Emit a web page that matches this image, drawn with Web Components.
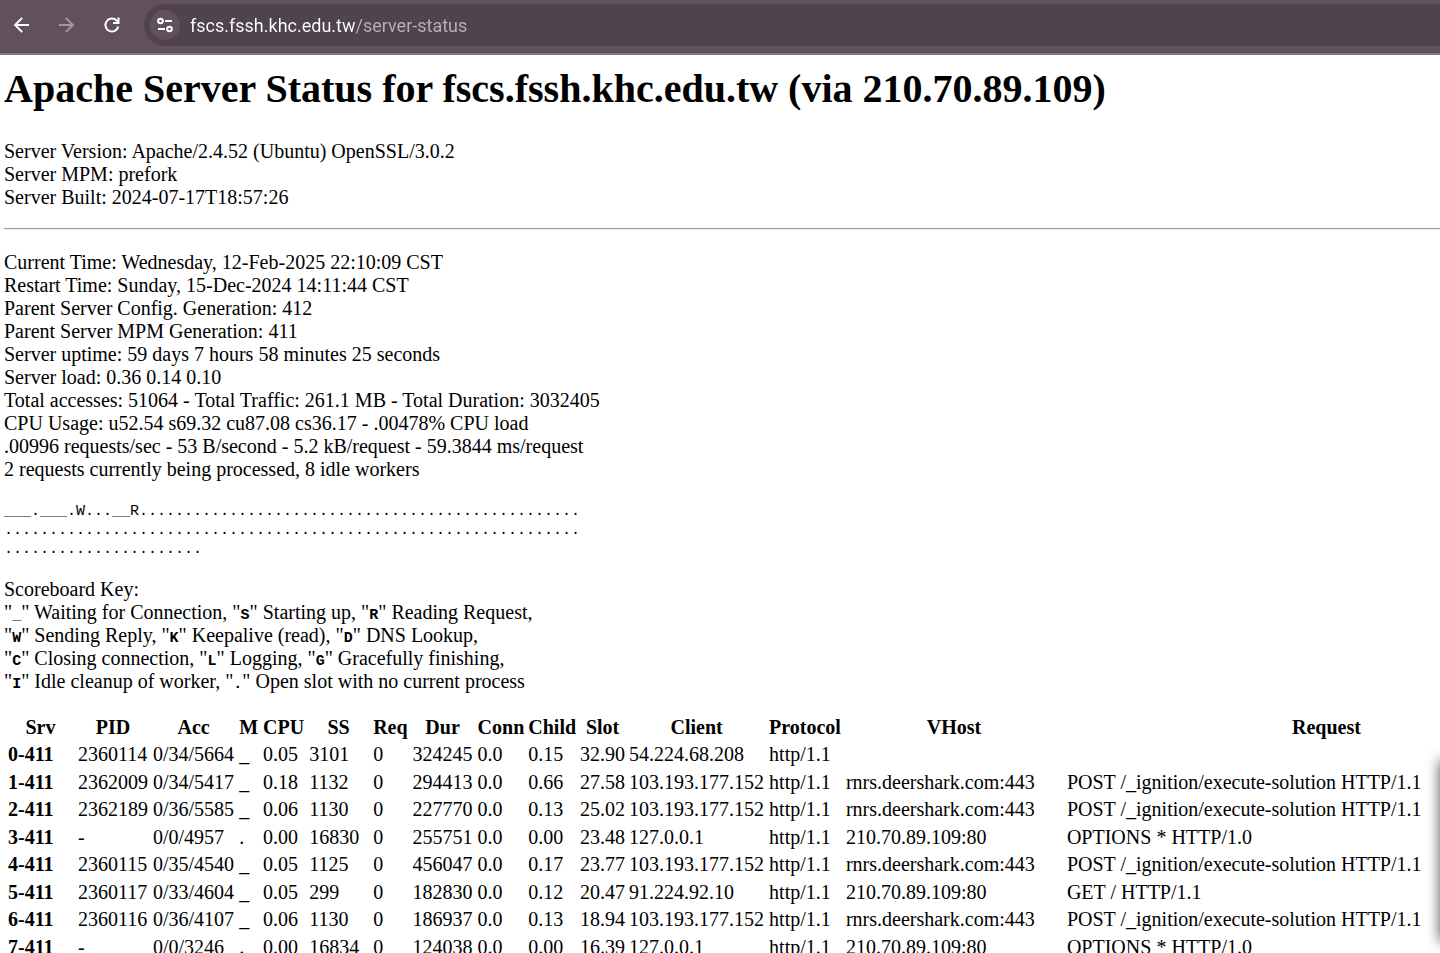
<!DOCTYPE html>
<html lang="en">
<head>
  <meta charset="utf-8">
  <meta name="viewport" content="width=device-width, initial-scale=1">
  <title>Apache Status</title>
  <style>
    body {
      margin: 0;
      height: 100vh;
      display: flex;
      flex-direction: column;
      overflow: hidden;
      background: #fff;
      color: #000;
      font-family: "Liberation Serif", "Times New Roman", serif;
      font-size: 20px;
      line-height: 23px;
    }
  </style>
</head>
<body>
  <browser-toolbar url="fscs.fssh.khc.edu.tw/server-status"></browser-toolbar>
  <status-page>
    <span slot="title">Apache Server Status for fscs.fssh.khc.edu.tw (via 210.70.89.109)</span>
    <info-list>
      <div>Server Version: Apache/2.4.52 (Ubuntu) OpenSSL/3.0.2</div>
      <div>Server MPM: prefork</div>
      <div>Server Built: 2024-07-17T18:57:26</div>
    </info-list>
    <info-list divided>
      <div>Current Time: Wednesday, 12-Feb-2025 22:10:09 CST</div>
      <div>Restart Time: Sunday, 15-Dec-2024 14:11:44 CST</div>
      <div>Parent Server Config. Generation: 412</div>
      <div>Parent Server MPM Generation: 411</div>
      <div>Server uptime: 59 days 7 hours 58 minutes 25 seconds</div>
      <div>Server load: 0.36 0.14 0.10</div>
      <div>Total accesses: 51064 - Total Traffic: 261.1 MB - Total Duration: 3032405</div>
      <div>CPU Usage: u52.54 s69.32 cu87.08 cs36.17 - .00478% CPU load</div>
      <div>.00996 requests/sec - 53 B/second - 5.2 kB/request - 59.3844 ms/request</div>
      <div>2 requests currently being processed, 8 idle workers</div>
    </info-list>
    <score-board workers="___.___.W...__R" slots="150"></score-board>
    <score-key></score-key>
    <worker-table></worker-table>
  </status-page>
  <panel-edge></panel-edge>

  <template id="toolbar-template">
    <style>
      :host {
        display: flex;
        flex: none;
        align-items: center;
        box-sizing: border-box;
        height: 55px;
        padding: 4px 0 7px 8px;
        background: #62515c;
        border-bottom: 2px solid #857580;
      }
      button {
        display: grid;
        place-items: center;
        flex: none;
        width: 28px;
        height: 28px;
        margin-right: 17px;
        padding: 0;
        border: 0;
        border-radius: 50%;
        background: none;
        color: #fff;
      }
      button:disabled {
        color: #a0979d;
      }
      form {
        display: flex;
        flex: 1;
        align-items: center;
        gap: 10px;
        height: 42px;
        margin-left: 1px;
        padding-left: 6px;
        border-radius: 21px 0 0 21px;
        background: #50444c;
      }
      form button {
        width: 30px;
        height: 30px;
        margin: 0;
        background: #62515c;
      }
      /* the host name is white, the path after it is dimmed */
      input {
        flex: 1;
        min-width: 0;
        height: 30px;
        padding: 0;
        border: 0;
        outline: 0;
        background: linear-gradient(90deg, #fff 165px, #b9b1b6 165px);
        background-clip: text;
        -webkit-background-clip: text;
        -webkit-text-fill-color: transparent;
        color: #fff;
        font: 18px Roboto, "Open Sans", sans-serif;
      }
      svg {
        display: block;
        fill: none;
        stroke: currentColor;
        stroke-width: 2;
      }
    </style>
    <button type="button" aria-label="Back">
      <svg width="20" height="20" viewBox="0 0 20 20"><path d="M17 10H3.500M10.200 2.900L3.100 10l7.100 7.100"/></svg>
    </button>
    <button type="button" aria-label="Forward" disabled>
      <svg width="20" height="20" viewBox="0 0 20 20"><path d="M2 10h13.500M8.800 2.900L15.900 10l-7.100 7.100"/></svg>
    </button>
    <button type="button" aria-label="Reload">
      <svg width="20" height="20" viewBox="0 0 20 20"><path d="M16.300 11.500a6.500 6.500 0 1 1-1.500-5.800L16.500 7.500M16.500 2.500v5.500H11"/></svg>
    </button>
    <form>
      <button type="button" aria-label="View site information">
        <svg width="18" height="18" viewBox="0 0 18 18"><circle cx="4.500" cy="5" r="2.300"/><path d="M9 5h7M2 13h7"/><circle cx="13.500" cy="13" r="2.300"/></svg>
      </button>
      <input type="text" aria-label="Address" spellcheck="false">
    </form>
  </template>

  <template id="page-template">
    <style>
      :host {
        display: block;
        flex: 1;
        min-height: 0;
        box-sizing: border-box;
        padding: 11px 0 0 4px;
        overflow: auto;
        scrollbar-width: none;
      }
      h1 {
        margin: 0 0 29px;
        font-size: 40px;
        line-height: 45px;
      }
    </style>
    <h1><slot name="title"></slot></h1>
    <slot></slot>
  </template>

  <template id="info-template">
    <style>
      :host {
        display: block;
        margin-bottom: 19px;
      }
      hr {
        display: none;
        margin: 0 0 21px;
        border: 0;
        border-top: 1px solid #9a9a9a;
        border-bottom: 1px solid #eee;
      }
      :host([divided]) hr {
        display: block;
      }
    </style>
    <hr>
    <slot></slot>
  </template>

  <template id="board-template">
    <style>
      :host {
        display: block;
      }
      pre {
        margin: 21px 0 19px;
        font: 15px/19px "Liberation Mono", "Courier New", monospace;
      }
    </style>
    <pre></pre>
  </template>

  <template id="key-template">
    <style>
      :host {
        display: block;
        margin-bottom: 20px;
      }
      p {
        margin: 0;
      }
      code {
        font: bold 15px/15px "Liberation Mono", "Courier New", monospace;
      }
    </style>
    <p>Scoreboard Key:<br>
      "<code>_</code>" Waiting for Connection,
      "<code>S</code>" Starting up,
      "<code>R</code>" Reading Request,<br>
      "<code>W</code>" Sending Reply,
      "<code>K</code>" Keepalive (read),
      "<code>D</code>" DNS Lookup,<br>
      "<code>C</code>" Closing connection,
      "<code>L</code>" Logging,
      "<code>G</code>" Gracefully finishing,<br>
      "<code>I</code>" Idle cleanup of worker,
      "<code>.</code>" Open slot with no current process</p>
  </template>

  <template id="table-template">
    <style>
      :host {
        display: block;
      }
      table {
        width: max-content;
        border-spacing: 3px 2px;
      }
      th, td {
        padding: 1px;
        white-space: nowrap;
      }
      td, tbody th {
        text-align: left;
      }
      tbody tr:nth-child(odd) > * {
        padding-bottom: 2px;
      }
      /* Child, Slot and Client sit closer together */
      tr > :nth-child(n+10):nth-child(-n+12) {
        padding-left: 0;
      }
      .srv { width: 67px; }
      .ss { width: 61px; }
      .vhost { width: 218px; }
      .request { width: 521px; }
    </style>
    <table>
      <colgroup>
        <col class="srv"><col span="4"><col class="ss"><col span="7"><col class="vhost"><col class="request">
      </colgroup>
      <thead><tr></tr></thead>
      <tbody></tbody>
    </table>
  </template>

  <script>
    class BaseElement extends HTMLElement {
      connectedCallback() {
        if (!this.shadowRoot) {
          const template = document.getElementById(this.constructor.templateId);
          this.attachShadow({ mode: "open" }).appendChild(template.content.cloneNode(true));
          this.render();
        }
      }
      render() {}
    }

    class BrowserToolbar extends BaseElement {
      static templateId = "toolbar-template";
      render() {
        this.shadowRoot.querySelector("input").value = this.getAttribute("url");
        this.shadowRoot.querySelector("form").addEventListener("submit", (event) => event.preventDefault());
      }
    }

    class StatusPage extends BaseElement {
      static templateId = "page-template";
    }

    class InfoList extends BaseElement {
      static templateId = "info-template";
    }

    class ScoreBoard extends BaseElement {
      static templateId = "board-template";
      render() {
        // unused slots are dots, 64 to a line
        const slots = this.getAttribute("workers").padEnd(Number(this.getAttribute("slots")), ".");
        this.shadowRoot.querySelector("pre").textContent = slots.match(/.{1,64}/g).join("\n");
      }
    }

    class ScoreKey extends BaseElement {
      static templateId = "key-template";
    }

    const columns = ["Srv", "PID", "Acc", "M", "CPU", "SS", "Req", "Dur", "Conn", "Child", "Slot", "Client", "Protocol", "VHost", "Request"];
    const solution = "POST /_ignition/execute-solution HTTP/1.1";
    const workers = [
      ["0-411", "2360114", "0/34/5664", "_", "0.05", "3101", "0", "324245", "0.0", "0.15", "32.90", "54.224.68.208", "http/1.1", "", ""],
      ["1-411", "2362009", "0/34/5417", "_", "0.18", "1132", "0", "294413", "0.0", "0.66", "27.58", "103.193.177.152", "http/1.1", "rnrs.deershark.com:443", solution],
      ["2-411", "2362189", "0/36/5585", "_", "0.06", "1130", "0", "227770", "0.0", "0.13", "25.02", "103.193.177.152", "http/1.1", "rnrs.deershark.com:443", solution],
      ["3-411", "-", "0/0/4957", ".", "0.00", "16830", "0", "255751", "0.0", "0.00", "23.48", "127.0.0.1", "http/1.1", "210.70.89.109:80", "OPTIONS * HTTP/1.0"],
      ["4-411", "2360115", "0/35/4540", "_", "0.05", "1125", "0", "456047", "0.0", "0.17", "23.77", "103.193.177.152", "http/1.1", "rnrs.deershark.com:443", solution],
      ["5-411", "2360117", "0/33/4604", "_", "0.05", "299", "0", "182830", "0.0", "0.12", "20.47", "91.224.92.10", "http/1.1", "210.70.89.109:80", "GET / HTTP/1.1"],
      ["6-411", "2360116", "0/36/4107", "_", "0.06", "1130", "0", "186937", "0.0", "0.13", "18.94", "103.193.177.152", "http/1.1", "rnrs.deershark.com:443", solution],
      ["7-411", "-", "0/0/3246", ".", "0.00", "16834", "0", "124038", "0.0", "0.00", "16.39", "127.0.0.1", "http/1.1", "210.70.89.109:80", "OPTIONS * HTTP/1.0"]
    ];

    class WorkerTable extends BaseElement {
      static templateId = "table-template";
      render() {
        this.shadowRoot.querySelector("thead tr").innerHTML = columns.map((name) => `<th scope="col">${name}</th>`).join("");
        this.shadowRoot.querySelector("tbody").innerHTML = workers.map(([srv, ...cells]) => `
          <tr><th scope="row">${srv}</th>${cells.map((cell) => `<td>${cell}</td>`).join("")}</tr>
        `).join("");
      }
    }

    // a panel that waits just past the right edge, only its shadow shows
    class PanelEdge extends HTMLElement {
      connectedCallback() {
        if (!this.shadowRoot) {
          this.attachShadow({ mode: "open" }).innerHTML = `
            <style>
              :host {
                position: absolute;
                left: 100%;
                bottom: 12px;
                width: 40px;
                height: 180px;
                box-shadow: 0 0 14px rgba(0, 0, 0, 0.7);
                pointer-events: none;
              }
            </style>
          `;
        }
      }
    }

    customElements.define("browser-toolbar", BrowserToolbar);
    customElements.define("status-page", StatusPage);
    customElements.define("info-list", InfoList);
    customElements.define("score-board", ScoreBoard);
    customElements.define("score-key", ScoreKey);
    customElements.define("worker-table", WorkerTable);
    customElements.define("panel-edge", PanelEdge);
  </script>
</body>
</html>
